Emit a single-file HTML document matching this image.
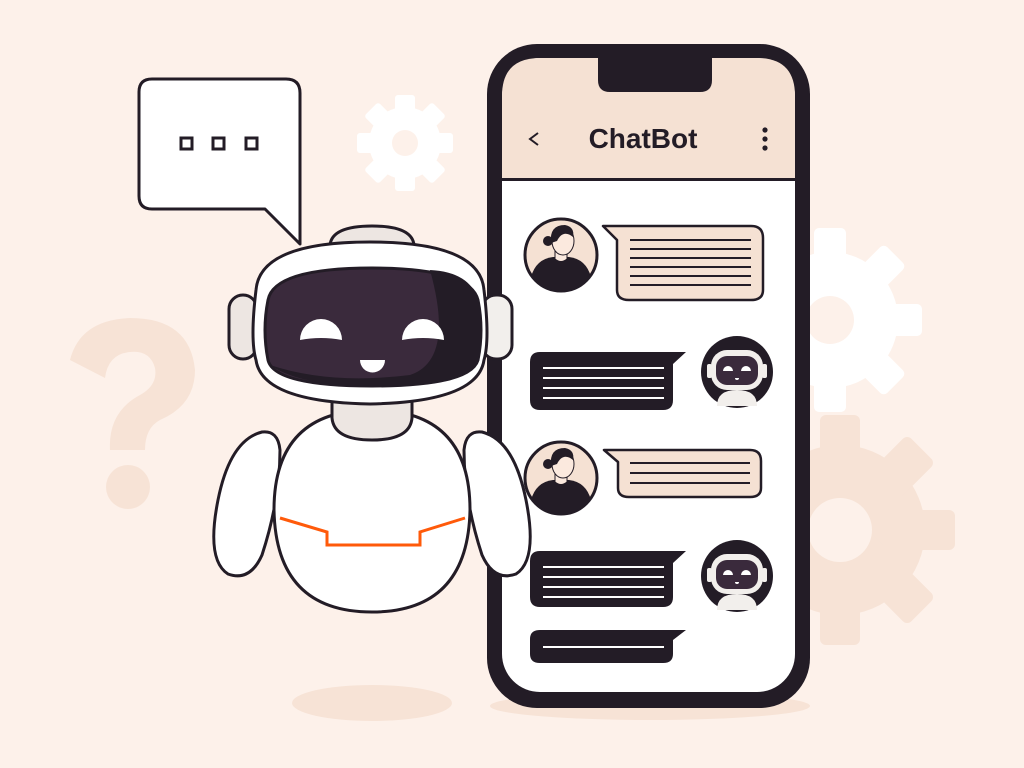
<!DOCTYPE html>
<html><head><meta charset="utf-8"><style>
html,body{margin:0;padding:0;background:#fdf1ea;}
svg{display:block}
</style></head><body>
<svg width="1024" height="768" viewBox="0 0 1024 768" xmlns="http://www.w3.org/2000/svg">
<rect width="1024" height="768" fill="#fdf1ea"/>
<!-- background decor -->
<g fill="#f7e3d6">
  <path d="M70 360 Q80 320 130 318 Q190 318 195 370 Q195 405 160 420 Q145 428 145 450 L110 450 Q108 412 140 395 Q158 385 155 368 Q150 350 130 352 Q108 354 105 378 Z"/>
  <circle cx="128" cy="487" r="22"/>
  <g transform="translate(840,530)">
    <circle r="85"/>
    <g><rect x="-20" y="-115" width="40" height="230" rx="6"/><rect x="-20" y="-115" width="40" height="230" rx="6" transform="rotate(45)"/><rect x="-20" y="-115" width="40" height="230" rx="6" transform="rotate(90)"/><rect x="-20" y="-115" width="40" height="230" rx="6" transform="rotate(135)"/></g>
    <circle r="32" fill="#fdf1ea"/>
  </g>
  <ellipse cx="372" cy="703" rx="80" ry="18"/>
  <ellipse cx="650" cy="706" rx="160" ry="14"/>
</g>
<g fill="#ffffff">
  <g transform="translate(830,320)">
    <circle r="68"/>
    <rect x="-16" y="-92" width="32" height="184" rx="5"/><rect x="-16" y="-92" width="32" height="184" rx="5" transform="rotate(45)"/><rect x="-16" y="-92" width="32" height="184" rx="5" transform="rotate(90)"/><rect x="-16" y="-92" width="32" height="184" rx="5" transform="rotate(135)"/>
    <circle r="24" fill="#fdf1ea"/>
  </g>
  <g transform="translate(405,143)">
    <circle r="36"/>
    <rect x="-10" y="-48" width="20" height="96" rx="3"/><rect x="-10" y="-48" width="20" height="96" rx="3" transform="rotate(45)"/><rect x="-10" y="-48" width="20" height="96" rx="3" transform="rotate(90)"/><rect x="-10" y="-48" width="20" height="96" rx="3" transform="rotate(135)"/>
    <circle r="13" fill="#fdf1ea"/>
  </g>
</g>
<!-- speech bubble -->
<path d="M152 79 H286 Q300 79 300 93 V244 L265 209 H152 Q139 209 139 196 V92 Q139 79 152 79 Z" fill="#fff" stroke="#231c26" stroke-width="3" stroke-linejoin="round"/>
<g fill="none" stroke="#231c26" stroke-width="3">
  <rect x="181" y="138" width="11" height="11"/><rect x="213" y="138" width="11" height="11"/><rect x="246" y="138" width="11" height="11"/>
</g>
<!-- phone -->
<rect x="487" y="44" width="323" height="664" rx="50" fill="#231c26"/>
<rect x="502" y="58" width="293" height="634" rx="38" fill="#fff"/>
<path d="M502 180 V96 Q502 58 540 58 H757 Q795 58 795 96 V180 Z" fill="#f5e1d3"/>
<rect x="502" y="178" width="293" height="3" fill="#231c26"/>
<path d="M598 56 H712 V80 Q712 92 700 92 H610 Q598 92 598 80 Z" fill="#231c26"/>
<text x="643" y="148" text-anchor="middle" font-family="Liberation Sans, sans-serif" font-weight="bold" font-size="28" fill="#231c26">ChatBot</text>
<path d="M538 133 L530 139 L538 145" fill="none" stroke="#231c26" stroke-width="2"/>
<g fill="#231c26"><circle cx="765" cy="130" r="2.6"/><circle cx="765" cy="139" r="2.6"/><circle cx="765" cy="148" r="2.6"/></g>
<defs>
  <g id="user">
    <circle r="36" fill="#f5e1d3" stroke="#231c26" stroke-width="3"/>
    <path d="M-30 22 Q-25 4 -8 2 L8 2 Q25 4 30 22 Q15 36 0 36 Q-15 36 -30 22Z" fill="#231c26"/>
    <path d="M-6 -4 L-6 4 Q0 9 6 4 L6 -4Z" fill="#fbe9de" stroke="#231c26" stroke-width="1"/>
    <ellipse cx="2" cy="-14" rx="11" ry="14" fill="#fbe9de" stroke="#231c26" stroke-width="1"/>
    <path d="M-10 -12 Q-12 -30 4 -30 Q14 -28 12 -18 Q2 -26 -4 -14 Z" fill="#231c26"/>
    <circle cx="-13" cy="-14" r="5" fill="#231c26"/>
  </g>
  <g id="bot">
    <circle r="36" fill="#231c26"/>
    <path d="M-20 34 Q-20 18 0 18 Q20 18 20 34 Z" fill="#f2efec"/>
    <rect x="-26" y="-22" width="52" height="40" rx="16" fill="#f2efec"/>
    <rect x="-21" y="-16" width="42" height="29" rx="11" fill="#3a2a3c"/>
    <rect x="-30" y="-8" width="5" height="14" rx="2" fill="#f2efec"/><rect x="25" y="-8" width="5" height="14" rx="2" fill="#f2efec"/>
    <path d="M-14 -1 A5 5 0 0 1 -4 -1Z" fill="#fff"/><path d="M4 -1 A5 5 0 0 1 14 -1Z" fill="#fff"/>
    <path d="M-2 6 A2 2 0 0 0 2 6Z" fill="#fff"/>
  </g>
</defs>
<use href="#user" x="561" y="255"/>
<path d="M603 226 H751 Q763 226 763 238 V290 Q763 300 751 300 H629 Q617 300 617 290 V240 Z" fill="#f5e1d3" stroke="#231c26" stroke-width="2.5" stroke-linejoin="round"/>
<g stroke="#231c26" stroke-width="2"><line x1="630" x2="751" y1="240" y2="240"/><line x1="630" x2="751" y1="249" y2="249"/><line x1="630" x2="751" y1="258" y2="258"/><line x1="630" x2="751" y1="267" y2="267"/><line x1="630" x2="751" y1="276" y2="276"/><line x1="630" x2="751" y1="285" y2="285"/></g>

<path d="M540 352 H686 L673 364 V400 Q673 410 663 410 H540 Q530 410 530 400 V362 Q530 352 540 352 Z" fill="#231c26"/>
<g stroke="#fff" stroke-width="2"><line x1="543" x2="664" y1="368" y2="368"/><line x1="543" x2="664" y1="378" y2="378"/><line x1="543" x2="664" y1="388" y2="388"/><line x1="543" x2="664" y1="398" y2="398"/></g>
<use href="#bot" x="737" y="372"/>

<use href="#user" x="561" y="478"/>
<path d="M604 450 H750 Q761 450 761 461 V488 Q761 497 750 497 H629 Q618 497 618 488 V462 Z" fill="#f5e1d3" stroke="#231c26" stroke-width="2.5" stroke-linejoin="round"/>
<g stroke="#231c26" stroke-width="2"><line x1="630" x2="750" y1="463" y2="463"/><line x1="630" x2="750" y1="473" y2="473"/><line x1="630" x2="750" y1="483" y2="483"/></g>

<path d="M540 551 H686 L673 563 V597 Q673 607 663 607 H540 Q530 607 530 597 V561 Q530 551 540 551 Z" fill="#231c26"/>
<g stroke="#fff" stroke-width="2"><line x1="543" x2="664" y1="567" y2="567"/><line x1="543" x2="664" y1="577" y2="577"/><line x1="543" x2="664" y1="587" y2="587"/><line x1="543" x2="664" y1="597" y2="597"/></g>
<use href="#bot" x="737" y="576"/>

<path d="M540 630 H686 L673 640 V654 Q673 663 663 663 H540 Q530 663 530 654 V639 Q530 630 540 630 Z" fill="#231c26"/>
<line x1="543" x2="664" y1="647" y2="647" stroke="#fff" stroke-width="2"/>

<!-- robot -->
<g stroke="#231c26" stroke-width="3" stroke-linejoin="round">
  <path d="M262 432 Q230 440 218 500 Q206 560 228 574 Q250 582 262 555 Q280 500 280 450 Q278 430 262 432Z" fill="#fff"/>
  <path d="M482 432 Q514 440 526 500 Q538 560 516 574 Q494 582 482 555 Q464 500 464 450 Q466 430 482 432Z" fill="#fff"/>
  <path d="M372 410 Q470 410 470 510 Q468 612 372 612 Q276 612 274 510 Q274 410 372 410Z" fill="#fff"/>
  <path d="M332 395 V418 Q334 440 372 440 Q410 440 412 418 V395 Z" fill="#ede6e2"/>
  <path d="M330 245 Q332 226 372 226 Q412 226 414 245 Z" fill="#ede6e2"/>
  <rect x="229" y="295" width="28" height="64" rx="14" fill="#ede6e2"/>
  <rect x="482" y="295" width="30" height="64" rx="14" fill="#f2efec"/>
  <path d="M370 242 Q480 242 484 290 Q490 340 484 360 Q478 402 370 404 Q262 402 256 360 Q250 340 256 290 Q260 242 370 242Z" fill="#fff"/>
</g>
<path d="M372 268 Q470 268 478 300 Q484 330 478 360 Q470 386 372 386 Q274 386 268 360 Q262 330 268 300 Q274 268 372 268Z" fill="#3a2a3c" stroke="#231c26" stroke-width="3"/>
<path d="M430 270 Q470 272 478 300 Q484 330 478 360 Q470 386 372 386 Q300 386 270 365 Q330 385 410 375 Q455 360 430 270Z" fill="#231c26"/>
<path d="M300 340 A21 21 0 0 1 342 340 Q321 336 300 340Z" fill="#fff"/>
<path d="M402 340 A21 21 0 0 1 444 340 Q423 336 402 340Z" fill="#fff"/>
<path d="M360 360 H385 A12.5 12.5 0 0 1 360 360Z" fill="#fff"/>
<path d="M280 518 L327 532 V545 L420 545 V532 L465 518" fill="none" stroke="#ff5a0a" stroke-width="3"/>
</svg>
</body></html>
